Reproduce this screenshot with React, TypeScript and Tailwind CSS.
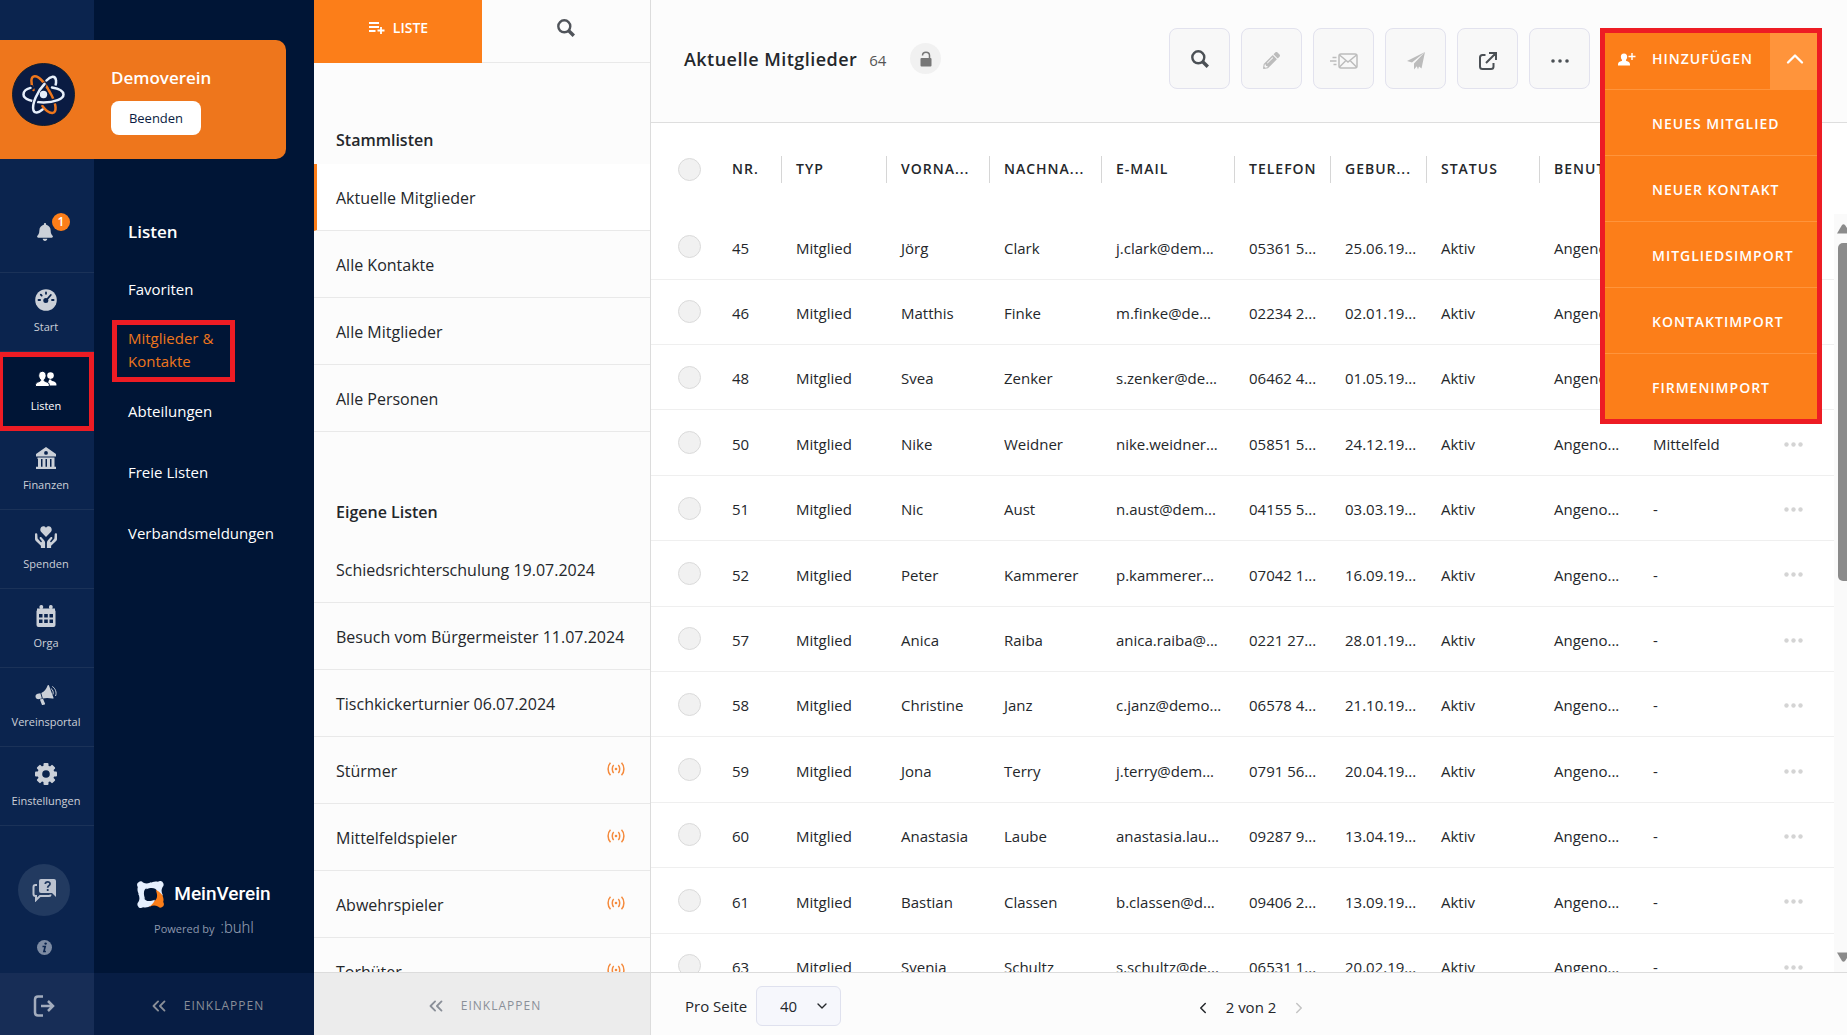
import { useState } from "react";
import type { ReactNode } from "react";
import { FaBell, FaPencilAlt } from "react-icons/fa";
import { ChevronDown, ChevronLeft, ChevronRight, ChevronsLeft, ChevronUp } from "lucide-react";

const railItems: { label: string; icon: ReactNode }[] = [
  { label: "Start", icon: <GaugeIcon /> },
  { label: "Listen", icon: <PeopleIcon /> },
  { label: "Finanzen", icon: <BankIcon /> },
  { label: "Spenden", icon: <DonateIcon /> },
  { label: "Orga", icon: <CalendarIcon /> },
  { label: "Vereinsportal", icon: <MegaphoneIcon /> },
  { label: "Einstellungen", icon: <GearIcon /> },
];

const baseLists = ["Aktuelle Mitglieder", "Alle Kontakte", "Alle Mitglieder", "Alle Personen"];

const ownLists = [
  { name: "Schiedsrichterschulung 19.07.2024", live: false },
  { name: "Besuch vom Bürgermeister 11.07.2024", live: false },
  { name: "Tischkickerturnier 06.07.2024", live: false },
  { name: "Stürmer", live: true },
  { name: "Mittelfeldspieler", live: true },
  { name: "Abwehrspieler", live: true },
  { name: "Torhüter", live: true },
];

const columns = ["NR.", "TYP", "VORNA...", "NACHNA...", "E-MAIL", "TELEFON", "GEBUR...", "STATUS", "BENUT..."];

const members = [
  ["45", "Mitglied", "Jörg", "Clark", "j.clark@dem...", "05361 5...", "25.06.19...", "Aktiv", "Angeno...", ""],
  ["46", "Mitglied", "Matthis", "Finke", "m.finke@de...", "02234 2...", "02.01.19...", "Aktiv", "Angeno...", ""],
  ["48", "Mitglied", "Svea", "Zenker", "s.zenker@de...", "06462 4...", "01.05.19...", "Aktiv", "Angeno...", ""],
  ["50", "Mitglied", "Nike", "Weidner", "nike.weidner...", "05851 5...", "24.12.19...", "Aktiv", "Angeno...", "Mittelfeld"],
  ["51", "Mitglied", "Nic", "Aust", "n.aust@dem...", "04155 5...", "03.03.19...", "Aktiv", "Angeno...", "-"],
  ["52", "Mitglied", "Peter", "Kammerer", "p.kammerer...", "07042 1...", "16.09.19...", "Aktiv", "Angeno...", "-"],
  ["57", "Mitglied", "Anica", "Raiba", "anica.raiba@...", "0221 27...", "28.01.19...", "Aktiv", "Angeno...", "-"],
  ["58", "Mitglied", "Christine", "Janz", "c.janz@demo...", "06578 4...", "21.10.19...", "Aktiv", "Angeno...", "-"],
  ["59", "Mitglied", "Jona", "Terry", "j.terry@dem...", "0791 56...", "20.04.19...", "Aktiv", "Angeno...", "-"],
  ["60", "Mitglied", "Anastasia", "Laube", "anastasia.lau...", "09287 9...", "13.04.19...", "Aktiv", "Angeno...", "-"],
  ["61", "Mitglied", "Bastian", "Classen", "b.classen@d...", "09406 2...", "13.09.19...", "Aktiv", "Angeno...", "-"],
  ["63", "Mitglied", "Svenja", "Schultz", "s.schultz@de...", "06531 1...", "20.02.19...", "Aktiv", "Angeno...", "-"],
];

const addOptions = ["NEUES MITGLIED", "NEUER KONTAKT", "MITGLIEDSIMPORT", "KONTAKTIMPORT", "FIRMENIMPORT"];

/* ICONS */
function SearchIcon() {
  return (
    <svg width="18" height="18" viewBox="0 0 18 18" fill="none" stroke="currentColor">
      <circle cx="7.300" cy="7.300" r="6" strokeWidth="2.400" />
      <path d="m11.500 11.500 5.300 5.300" strokeWidth="3.400" />
    </svg>
  );
}

function GaugeIcon() {
  return (
    <svg width="22" height="22" viewBox="0 0 22 22">
      <circle cx="11" cy="11" r="10.800" fill="currentColor" />
      <g stroke="#0b244e" strokeWidth="1.800" strokeLinecap="round">
        <path d="M11 11.500 15.800 6" />
        <path d="M11 3.500v1.300M5.800 5.600l.9 1M3.500 11h1.600M17 11h1.600" />
      </g>
      <circle cx="10.800" cy="11.600" r="2.500" fill="#0b244e" />
    </svg>
  );
}

function PeopleIcon() {
  return (
    <svg width="22" height="16" viewBox="0 0 22 16" fill="currentColor">
      <circle cx="15.500" cy="4.600" r="3.300" />
      <path d="M12 14.400h9.400c.5-2.600-1.400-3.600-4.200-4.300-.8-.2-1-.9-1-1.600h-2z" />
      <g stroke="#001536" strokeWidth="1">
        <path d="M.5 15.500c-.4-3.400 1-4.200 4-5 1-.3 1.300-.9 1.100-1.700-1.200-1-1.900-2.500-1.900-4.300C3.700 1.900 5.200.3 7.400.3s3.700 1.600 3.700 4.200c0 1.800-.7 3.300-1.900 4.300-.2.800.1 1.400 1.100 1.700 3 .8 4.400 1.600 4 5z" />
      </g>
    </svg>
  );
}

function BankIcon() {
  return (
    <svg width="22" height="22" viewBox="0 0 22 22" fill="currentColor">
      <path fillRule="evenodd" d="M11 0 21 7v2.500H1V7zM11 4a1.900 1.900 0 1 0 0 3.800A1.900 1.900 0 0 0 11 4z" />
      <path d="M2.500 10.500h17V12h-17zM3 12h3v8H3zM7.500 12h3v8h-3zM12 12h3v8h-3zM16.500 12h3v8h-3zM1 19.800h20V22H1z" />
    </svg>
  );
}

function DonateIcon() {
  return (
    <svg width="22" height="22" viewBox="0 0 22 22" fill="currentColor">
      <path d="M11 11 6.200 6.100C4.900 4.700 5 2.300 6.300 1.100 7.700-.1 9.700.2 11 1.800 12.300.2 14.300-.1 15.700 1.100c1.300 1.200 1.400 3.600.1 5z" />
      <path d="M0 8.200c0-1.400 2.200-1.400 2.300 0l.3 4.300 3 3.400c.7.700 1.700-.1 1.100-.9l-2-2.600c-.5-1.200.8-2 1.700-1.200l2.700 3.100c.7.900 1 1.600 1 2.700V22H5.900v-2.200L.9 15C.2 14.300 0 13.600 0 12.700zM22 8.200c0-1.400-2.200-1.400-2.300 0l-.3 4.300-3 3.400c-.7.700-1.700-.1-1.100-.9l2-2.600c.5-1.200-.8-2-1.700-1.200l-2.700 3.100c-.7.900-1 1.600-1 2.700V22h4.200v-2.200l5-4.800c.7-.7.900-1.400.9-2.300z" />
    </svg>
  );
}

function CalendarIcon() {
  return (
    <svg width="20" height="22" viewBox="0 0 20 22" fill="currentColor">
      <rect x="3.500" width="3.600" height="4" rx="1.500" />
      <rect x="13" width="3.600" height="4" rx="1.500" />
      <path
        fillRule="evenodd"
        d="M1 5.500h18q.5 0 .5.500v14q0 2-2 2h-15q-2 0-2-2V6q0-.5.500-.5zM3 9v3.500h3.500V9zM8.200 9v3.500h3.600V9zM13.500 9v3.500H17V9zM3 14.500V18h3.500v-3.500zM8.200 14.500V18h3.600v-3.500zM13.500 14.500V18H17v-3.500z"
      />
      <path d="M1 3.500h18v3H1z" />
    </svg>
  );
}

function MegaphoneIcon() {
  return (
    <svg width="22" height="20" viewBox="0 0 22 20" fill="currentColor">
      <path d="M5.400 8.300 6.900 13.400l-2.700.7C.2 14.500-.9 10 2.600 8.800zM6.300 8c3.200-1.400 5-3.900 6.300-7.500.3-.7 1.100-.7 1.400 0L18.500 12.700c.2.700-.2 1.100-.9.900-3.900-.8-6.700-.9-9.800-.1zM4.900 14.500l3.100-.8 2 4.800c.2.600 0 .9-.5 1.100l-1.600.4c-.5.100-.9-.1-1.100-.6z" />
      <path d="M15.900 3.500c1.900 1 2.900 4.100 2 6M17.300 1.500c3.100 1.700 4.700 6.300 3.200 9.500" fill="none" stroke="currentColor" strokeWidth="1" />
    </svg>
  );
}

function GearIcon() {
  return (
    <svg width="22" height="22" viewBox="0 0 22 22">
      <g fill="currentColor">
        <rect x="8.500" y="0" width="5" height="22" rx="1" />
        <rect x="8.500" y="0" width="5" height="22" rx="1" transform="rotate(45 11 11)" />
        <rect x="8.500" y="0" width="5" height="22" rx="1" transform="rotate(90 11 11)" />
        <rect x="8.500" y="0" width="5" height="22" rx="1" transform="rotate(135 11 11)" />
        <circle cx="11" cy="11" r="8.500" />
      </g>
      <circle cx="11" cy="11" r="3.800" fill="#0b244e" />
    </svg>
  );
}

function AtomLogo() {
  return (
    <svg width="63" height="63" viewBox="0 0 63 63" fill="none">
      <circle cx="31.500" cy="31.500" r="31" fill="#0a1b42" stroke="#16202c" />
      <g strokeLinecap="round">
        {/* far half of the white orbit */}
        <path d="M34.500 17.500c4-4.500 9-5.500 9.500 0 .2 1.500 0 3-.4 4.500" stroke="#e6effb" strokeWidth="2.500" />
        <path d="M21.500 27c-3-7-3-13.500 1.200-13.700 5-.2 12 9.500 17 19.200 4.500 9 5.500 17 .7 17.500-3.200.2-6.700-2.500-10-7" stroke="#ee761c" strokeWidth="2.500" />
        <path d="M39.500 24.300C46.500 25.400 51.500 28 51.500 31.500c0 4.500-9 8-20 8s-20-3.500-20-8c0-3.300 3-5.800 8-7" stroke="#0a1b42" strokeWidth="5" />
        <path d="M40 24.400C47 25.600 51.500 28 51.500 31.500c0 4.500-9 8-20 8s-20-3.500-20-8c0-3.300 3-5.600 7-6.600" stroke="#e6effb" strokeWidth="2.500" />
        <path d="M32 22c-6.500 7.500-11.500 18-10 25" stroke="#0a1b42" strokeWidth="5" />
        <path d="M32.500 21C25.500 28 19.500 41 21.500 47.500c1.200 3.200 4.800 2.500 9-1" stroke="#e6effb" strokeWidth="2.500" />
      </g>
      <circle cx="31.500" cy="31.500" r="3.700" fill="#e6effb" />
    </svg>
  );
}

function ClubLogo() {
  const arm =
    "M.8 6C-.4 4.600-.1 1.800 1.600 1.200 3 0 5 .1 6 1.400c2.800 1.500 5.500 1.400 8.500-.4C14.300 4 12.500 5.600 10 6.800 6.800 8.400 5.900 12 8.200 18 2.500 15.500-.6 11 .8 6z";
  return (
    <svg width="27" height="27" viewBox="0 0 27 27" fill="#e6f0ff">
      <path d={arm} />
      <path d={arm} transform="rotate(90 13.500 13.500)" />
      <path d={arm} transform="rotate(180 13.500 13.500)" fill="#fc7e19" />
      <path d={arm} transform="rotate(270 13.500 13.500)" />
    </svg>
  );
}

function ChatIcon() {
  return (
    <svg width="24" height="24" viewBox="0 0 24 24">
      <path d="M5 7H3.500Q1.500 7 1.500 9v7q0 2 2 2H4v4l4-4h9q1.500 0 1.500-1.500" fill="none" stroke="#bcc3d0" strokeWidth="2" />
      <path d="M9 1h13q2 0 2 2v16l-4-4H9q-2 0-2-2V3q0-2 2-2z" fill="#bcc3d0" />
      <path d="M13.300 6c.2-3 4.900-2.700 4.700 0-.1 1.700-2.300 1.700-2.300 3.700M15.700 11v2" fill="none" stroke="#223a60" strokeWidth="1.800" />
    </svg>
  );
}

function InfoIcon() {
  return (
    <svg width="15" height="15" viewBox="0 0 15 15">
      <circle cx="7.500" cy="7.500" r="7.500" fill="#7d8ba3" />
      <circle cx="8.600" cy="3.600" r="1.200" fill="#0b244e" />
      <path d="M5.500 6.500h2.700L6.900 11.500h2" fill="none" stroke="#0b244e" strokeWidth="1.600" />
    </svg>
  );
}

function LogoutIcon() {
  return (
    <svg width="22" height="22" viewBox="0 0 22 22" fill="none" stroke="#a3acbd" strokeWidth="2.500">
      <path d="M10 1.500H5q-3 0-3 3v13q0 3 3 3h5" />
      <path d="M8 11h12M15 6l5 5-5 5" />
    </svg>
  );
}

function LiveIcon() {
  return (
    <svg width="18" height="14" viewBox="0 0 18 14" fill="none" stroke="#f58a3c" strokeWidth="1.500">
      <circle cx="9" cy="7" r="1.300" fill="#f58a3c" stroke="none" />
      <path d="M3.500.8C.3 4 .3 10 3.500 13.200M6.700 3c-1.900 2-1.900 6 0 8M14.500.8c3.200 3.200 3.200 9.200 0 12.400M11.300 3c1.900 2 1.900 6 0 8" />
    </svg>
  );
}

function LockIcon() {
  return (
    <svg width="12" height="16" viewBox="0 0 12 16">
      <rect x=".5" y="7" width="11" height="8.500" rx="1" fill="#777" />
      <path d="M2.500 4.500C2.500 0 9.500 0 9.500 4.500V8" fill="none" stroke="#777" strokeWidth="1.500" />
    </svg>
  );
}

function ListAddIcon() {
  return (
    <svg width="17" height="12" viewBox="0 0 17 12" stroke="currentColor" strokeWidth="1.800" fill="none">
      <path d="M1 1h10M1 5h10M1 9h6.500M13 5v7M9.500 8.500h7" />
    </svg>
  );
}

function MailFastIcon() {
  return (
    <svg width="28" height="16" viewBox="0 0 28 16" fill="none" stroke="currentColor" strokeWidth="1.500">
      <rect x="9" y="1" width="18" height="14" rx="2" />
      <path d="m9.500 2 8.500 7 8.500-7M9.500 14l6-6M26.500 14l-6-6M2.500 4.500h4M0 8h6.500M3.500 11.500h3" />
    </svg>
  );
}

function PlaneIcon() {
  return (
    <svg width="18" height="18" viewBox="0 0 18 18" fill="currentColor">
      <path d="M18 0 0 9l5 1.500zM18 0 7 11.500V17.500l2.800-3.300 1.200 3.300 1-3 2.500 2z" />
    </svg>
  );
}

function OpenIcon() {
  return (
    <svg width="18" height="18" viewBox="0 0 18 18" fill="none" stroke="currentColor" strokeWidth="2">
      <path d="M6.500 3H3.500Q1 3 1 5.500v9Q1 17 3.500 17H12q2.500 0 2.500-2.500V11M10 1h7v7M16.500 1.500 7 11" />
    </svg>
  );
}

function Dots() {
  return (
    <svg width="19" height="5" viewBox="0 0 19 5" fill="currentColor">
      <circle cx="2.500" cy="2.500" r="2.200" />
      <circle cx="9.500" cy="2.500" r="2.200" />
      <circle cx="16.500" cy="2.500" r="2.200" />
    </svg>
  );
}

function MoreIcon() {
  return (
    <svg width="18" height="4" viewBox="0 0 18 4" fill="currentColor">
      <circle cx="2" cy="2" r="1.800" />
      <circle cx="9" cy="2" r="1.800" />
      <circle cx="16" cy="2" r="1.800" />
    </svg>
  );
}

function AddPersonIcon() {
  return (
    <svg width="18" height="14" viewBox="0 0 18 14" fill="currentColor">
      <path d="M0 13.500c-.2-3.300 1-3.700 3.600-4.500.5-.2.6-.7.300-1.200C2.200 5.900 2.300 1.500 6 1.500s3.800 4.400 2.100 6.300c-.3.500-.2 1 .3 1.200 2.600.8 3.800 1.200 3.600 4.500z" />
      <path d="M14 1v7M10.500 4.500h7" stroke="currentColor" strokeWidth="1.400" />
    </svg>
  );
}

const toolButtons = [
  { label: "Suchen", icon: <SearchIcon />, disabled: false },
  { label: "Bearbeiten", icon: <FaPencilAlt size={17} />, disabled: true },
  { label: "E-Mail senden", icon: <MailFastIcon />, disabled: true },
  { label: "Nachricht senden", icon: <PlaneIcon />, disabled: true },
  { label: "Exportieren", icon: <OpenIcon />, disabled: false },
  { label: "Mehr", icon: <MoreIcon />, disabled: false },
];

function Circle({ label }: { label: string }) {
  return (
    <input
      type="checkbox"
      aria-label={label}
      className="block size-[23px] appearance-none rounded-full border border-[#dadada] bg-[#f1f1f1] checked:bg-[#fc7e19]"
    />
  );
}

export default function App() {
  const [menuOpen, setMenuOpen] = useState(true);
  const [activeList, setActiveList] = useState("Aktuelle Mitglieder");
  const [pageSize, setPageSize] = useState("40");

  return (
    <div className="flex h-screen overflow-hidden bg-white font-['Open_Sans',sans-serif] text-[15px] text-[#24272b]">
      {/* NAVIGATION */}
      <div className="relative flex shrink-0">
        <nav className="flex w-[94px] flex-col bg-[#0b244e] text-[#cbd0d8]">
          <button
            aria-label="Benachrichtigungen"
            className="mt-[193px] flex h-[80px] items-center justify-center border-b border-[#1b3258] pr-1 pb-[2px]"
          >
            <span className="relative">
              <FaBell size={18} />
              <span className="absolute -top-[10px] left-4 flex size-[18px] items-center justify-center rounded-full bg-[#fc7e19] text-[12px] font-semibold text-white">
                1
              </span>
            </span>
          </button>

          {railItems.map((item) => (
            <a
              key={item.label}
              href="#"
              className={`flex h-[79px] shrink-0 flex-col items-center text-[11px] leading-4 ${
                item.label === "Listen"
                  ? "border-[5px] border-l-[3px] border-[#ed1c24] bg-[#001536] pt-[11px] text-white"
                  : "border-b border-[#1b3258] pt-4 pr-[2px]"
              }`}
            >
              <span className="flex h-[22px] items-center">{item.icon}</span>
              <span className="mt-2">{item.label}</span>
            </a>
          ))}

          <div className="mt-auto mb-[18px] flex flex-col items-center gap-6 pr-[6px]">
            <button aria-label="Hilfe" className="flex size-[52px] items-center justify-center rounded-full bg-[#223a60]">
              <ChatIcon />
            </button>
            <button aria-label="Info">
              <InfoIcon />
            </button>
          </div>
          <button aria-label="Abmelden" className="flex h-[62px] shrink-0 items-center justify-center bg-[#172d56] pt-1 pr-[6px]">
            <LogoutIcon />
          </button>
        </nav>

        <aside className="flex w-[220px] flex-col bg-[#001536] text-white">
          <h2 className="mt-[220px] pl-[34px] text-[17px] leading-6 font-semibold">Listen</h2>
          <div className="mt-[33px] flex flex-col items-start leading-6">
            <a href="#" className="pl-[34px]">Favoriten</a>
            <a
              href="#"
              className="mt-[19px] ml-[18px] w-[123px] border-[5px] border-[#ed1c24] pt-[2px] pb-1 pl-[11px] leading-[23px] text-[#ee761c]"
            >
              Mitglieder &amp; Kontakte
            </a>
            <a href="#" className="mt-[17px] pl-[34px]">Abteilungen</a>
            <a href="#" className="mt-[37px] pl-[34px]">Freie Listen</a>
            <a href="#" className="mt-[37px] pl-[34px]">Verbandsmeldungen</a>
          </div>

          <div className="mt-auto mb-8 flex flex-col items-center">
            <div className="flex items-center gap-[10px] font-['Roboto',sans-serif] text-[19px] leading-7 font-medium">
              <ClubLogo />
              MeinVerein
            </div>
            <div className="mt-2 flex items-baseline gap-[6px] text-[11px] leading-6 text-[#8e99ae]">
              Powered by
              <span className="font-['Roboto',sans-serif] text-[16px] font-light">:buhl</span>
            </div>
          </div>
          <button className="flex h-[62px] shrink-0 items-center justify-center gap-[14px] bg-[#071d44] pt-1 pl-1 text-[12px] tracking-[1px] text-[#8a8f98]">
            <ChevronsLeft size={22} strokeWidth={2} />
            EINKLAPPEN
          </button>
        </aside>

        <div className="absolute top-10 left-0 flex h-[119px] w-[286px] items-start rounded-r-[10px] bg-[#ee761c] pt-[23px] pl-3">
          <AtomLogo />
          <div className="ml-9">
            <div className="mt-[3px] text-[17px] leading-6 font-semibold text-white">Demoverein</div>
            <button className="mt-[11px] h-[34px] w-[90px] rounded-lg bg-white pt-[2px] text-[13px] text-[#0a1b42]">
              Beenden
            </button>
          </div>
        </div>
      </div>

      {/* LISTS */}
      <section className="flex w-[337px] shrink-0 flex-col border-r border-[#dcdcdc] bg-[#fcfcfc]">
        <div className="flex h-[63px] shrink-0">
          <button className="flex flex-1 items-center justify-center gap-2 bg-[#fc7e19] pb-2 text-[14px] font-semibold text-white">
            <ListAddIcon />
            LISTE
          </button>
          <button
            aria-label="Listen durchsuchen"
            className="flex flex-1 items-center justify-center border-b border-[#e9e9e9] pb-[6px] text-[#50545a]"
          >
            <SearchIcon />
          </button>
        </div>
        <div className="min-h-0 flex-1 overflow-hidden text-[16px] whitespace-nowrap">
          <h3 className="mt-[65px] mb-[11px] pl-[22px] leading-[25px] font-semibold">Stammlisten</h3>
          {baseLists.map((name) => (
            <button
              key={name}
              onClick={() => setActiveList(name)}
              className={`flex h-[67px] w-full items-center border-b border-b-[#e9e9e9] pt-[2px] text-left ${
                activeList === name ? "border-l-[3px] border-l-[#fc7e19] bg-white pl-[19px]" : "pl-[22px]"
              }`}
            >
              {name}
            </button>
          ))}
          <h3 className="mt-[68px] mb-[11px] pl-[22px] leading-[25px] font-semibold">Eigene Listen</h3>
          {ownLists.map((list) => (
            <button
              key={list.name}
              onClick={() => setActiveList(list.name)}
              className="flex h-[67px] w-full items-center justify-between border-b border-[#e9e9e9] pt-[2px] pr-[25px] pl-[22px] text-left"
            >
              {list.name}
              {list.live && (
                <span className="pb-1">
                  <LiveIcon />
                </span>
              )}
            </button>
          ))}
        </div>
        <button className="flex h-[63px] shrink-0 items-center justify-center gap-[14px] border-t border-[#dcdcdc] bg-[#ececec] pt-1 pl-[2px] text-[12px] tracking-[1px] text-[#8a8f98]">
          <ChevronsLeft size={22} strokeWidth={2} />
          EINKLAPPEN
        </button>
      </section>

      {/* MEMBERS */}
      <main className="flex min-w-0 flex-1 flex-col">
        <header className="flex h-[123px] shrink-0 items-start border-b border-[#dedede] bg-[#fcfcfc] pt-7 pr-[25px] pl-[33px]">
          <div className="flex h-[61px] items-center">
            <h1 className="pt-[2px] text-[18px] font-semibold tracking-wide">Aktuelle Mitglieder</h1>
            <span className="ml-3 pt-1 text-[15px] text-[#555]">64</span>
            <button aria-label="Liste sperren" className="ml-6 flex size-[31px] items-center justify-center rounded-full bg-[#f1f1f1]">
              <LockIcon />
            </button>
          </div>

          <div className="ml-auto flex gap-[11px]">
            {toolButtons.map((button) => (
              <button
                key={button.label}
                aria-label={button.label}
                disabled={button.disabled}
                className="flex size-[61px] items-center justify-center rounded-lg border border-[#e2e2ee] bg-[#f8f8f8] pt-1 text-[#4b5055] first:pt-0 disabled:text-[#bcbcbc]"
              >
                {button.icon}
              </button>
            ))}
          </div>

          <div className="relative ml-[10px] h-[61px] w-[222px]">
            <div className="absolute inset-x-0 top-0 z-10 border-[5px] border-[#ed1c24] bg-[#fc7e19] text-[14px] font-semibold text-white">
              <div className="flex h-14">
                <button className="flex flex-1 items-center gap-4 pb-[5px] pl-[13px] tracking-[1px]">
                  <AddPersonIcon />
                  HINZUFÜGEN
                </button>
                <button
                  aria-label="Menü umschalten"
                  onClick={() => setMenuOpen(!menuOpen)}
                  className="flex w-[47px] items-center justify-center bg-[#ff943b] pb-[5px] pl-[3px]"
                >
                  <ChevronUp size={28} strokeWidth={2} />
                </button>
              </div>
              {menuOpen &&
                addOptions.map((option) => (
                  <button
                    key={option}
                    className="flex h-[66px] w-full items-center border-t border-[#ff943b] pt-[2px] pl-[47px] tracking-[1px]"
                  >
                    {option}
                  </button>
                ))}
            </div>
          </div>
        </header>

        <div className="flex min-h-0 flex-1 overflow-hidden">
          <div className="min-w-0 flex-1 overflow-hidden">
            <table className="h-[876px] w-full table-fixed border-collapse text-left">
              <colgroup>
                <col className="w-[67px]" />
                <col className="w-[64px]" />
                <col className="w-[105px]" />
                <col className="w-[103px]" />
                <col className="w-[112px]" />
                <col className="w-[133px]" />
                <col className="w-[96px]" />
                <col className="w-[96px]" />
                <col className="w-[113px]" />
                <col className="w-[99px]" />
                <col className="w-[128px]" />
                <col className="w-[67px]" />
              </colgroup>
              <thead>
                <tr className="h-[92px]">
                  <th className="pl-[27px]">
                    <Circle label="Alle auswählen" />
                  </th>
                  {columns.map((column) => (
                    <th key={column} className="p-0 text-[14px] font-semibold tracking-[1px] whitespace-nowrap">
                      <span className="block h-[27px] border-r border-[#d6d6d6] pl-[14px] leading-[26px]">{column}</span>
                    </th>
                  ))}
                  <th />
                  <th />
                </tr>
              </thead>
              <tbody>
                {members.map((member) => (
                  <tr key={member[0]} className="border-b border-[#efefef]">
                    <td className="pl-[27px]">
                      <Circle label={`Mitglied ${member[0]} auswählen`} />
                    </td>
                    {member.map((value, index) => (
                      <td key={index} className="pt-[3px] pl-[14px] whitespace-nowrap">
                        {value}
                      </td>
                    ))}
                    <td className="pt-[3px] pl-[17px] text-[#d4d4d4]">
                      <button aria-label="Aktionen" className="block">
                        <Dots />
                      </button>
                    </td>
                  </tr>
                ))}
              </tbody>
            </table>
          </div>

          {/* scrollbar */}
          <div className="mt-[91px] flex w-[13px] shrink-0 flex-col items-end overflow-hidden bg-[#fafafa] py-[10px] text-[#8b8b8b]">
            <svg width="10" height="10" viewBox="0 0 10 10" fill="currentColor">
              <path d="M0 9.500 5 1q1.500-1.500 3 0l2 3v5.500z" />
            </svg>
            <div className="mt-[9px] h-[338px] w-[9px] rounded-l-[5px] bg-[#8b8b8b]" />
            <svg className="mt-auto" width="10" height="10" viewBox="0 0 10 10" fill="currentColor">
              <path d="M0 .5 5 9q1.500 1.500 3 0l2-3V.5z" />
            </svg>
          </div>
        </div>

        <footer className="flex h-[63px] shrink-0 items-center border-t border-[#dcdcdc] bg-[#fcfcfc] pt-1 pr-[186px] pl-[34px]">
          <label htmlFor="page-size" className="w-[71px]">Pro Seite</label>
          <div className="relative">
            <select
              id="page-size"
              value={pageSize}
              onChange={(e) => setPageSize(e.target.value)}
              className="h-10 w-[85px] appearance-none rounded-md border border-[#dfe1ee] bg-[#f6f7fc] pl-[23px]"
            >
              <option>20</option>
              <option>40</option>
              <option>60</option>
            </select>
            <ChevronDown size={16} className="pointer-events-none absolute top-3 right-[11px]" />
          </div>
          <div className="flex flex-1 items-center justify-center gap-[14px] pt-[3px]">
            <button aria-label="Vorherige Seite">
              <ChevronLeft size={18} />
            </button>
            <span>2 von 2</span>
            <button aria-label="Nächste Seite" className="text-[#c4c4c4]">
              <ChevronRight size={18} />
            </button>
          </div>
        </footer>
      </main>
    </div>
  );
}
